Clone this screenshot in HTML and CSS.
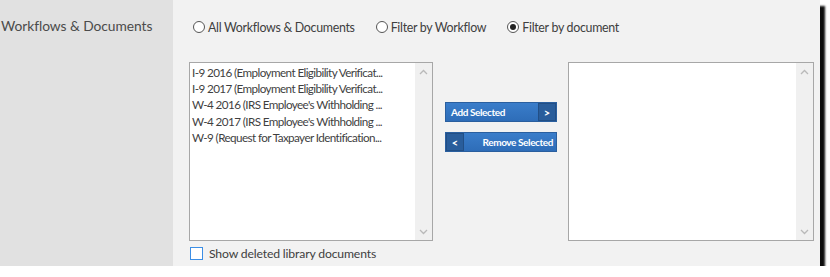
FILE: index.html
```html
<!DOCTYPE html>
<html>
<head>
<meta charset="utf-8">
<link rel="stylesheet" href="styles.css">
</head>
<body>
<div class="panel">
  <div class="label-col">Workflows &amp; Documents</div>
  <div class="content">
    <div class="radios">
      <label class="radio"><span class="dot"></span>All Workflows &amp; Documents</label>
      <label class="radio"><span class="dot"></span>Filter by Workflow</label>
      <label class="radio checked"><span class="dot"></span>Filter by document</label>
    </div>
    <div class="lists">
      <div class="listbox left">
        <ul class="items">
          <li>I-9 2016 (Employment Eligibility Verificat...</li>
          <li>I-9 2017 (Employment Eligibility Verificat...</li>
          <li>W-4 2016 (IRS Employee's Withholding ...</li>
          <li>W-4 2017 (IRS Employee's Withholding ...</li>
          <li>W-9 (Request for Taxpayer Identification...</li>
        </ul>
        <div class="scrollbar">
          <svg class="chev" width="9" height="6" viewBox="0 0 9 6"><path d="M1 5 L4.5 1.5 L8 5" fill="none" stroke="#b9b9b9" stroke-width="1.3"/></svg>
          <svg class="chev" width="9" height="6" viewBox="0 0 9 6"><path d="M1 1 L4.5 4.5 L8 1" fill="none" stroke="#b9b9b9" stroke-width="1.3"/></svg>
        </div>
      </div>
      <div class="buttons">
        <div class="btn add"><span class="btext">Add Selected</span><span class="arrow">&gt;</span></div>
        <div class="btn remove"><span class="arrow">&lt;</span><span class="btext">Remove Selected</span></div>
      </div>
      <div class="listbox right">
        <ul class="items"></ul>
        <div class="scrollbar">
          <svg class="chev" width="9" height="6" viewBox="0 0 9 6"><path d="M1 5 L4.5 1.5 L8 5" fill="none" stroke="#b9b9b9" stroke-width="1.3"/></svg>
          <svg class="chev" width="9" height="6" viewBox="0 0 9 6"><path d="M1 1 L4.5 4.5 L8 1" fill="none" stroke="#b9b9b9" stroke-width="1.3"/></svg>
        </div>
      </div>
    </div>
    <label class="check"><span class="box"></span>Show deleted library documents</label>
  </div>
</div>
</body>
</html>
```
FILE: styles.css
```css
* { box-sizing: border-box; }
body {
  margin: 0;
  background: #ffffff;
  font-family: Lato, "Open Sans", sans-serif;
  color: #4a4a4a;
}
.panel {
  display: flex;
  width: 820px;
  height: 266px;
  box-shadow: 5px 6px 2px rgba(0,0,0,0.95);
}
.label-col {
  width: 173px;
  background: #e1e1e1;
  padding: 17px 0 0 1px;
  font-size: 13.8px;
  letter-spacing: -0.05px;
  color: #4b4b4b;
}
.content {
  flex: 1;
  background: #f2f2f2;
  padding: 18px 0 0 16px;
}
.radios {
  display: flex;
  padding-left: 4px;
  gap: 21px;
  font-size: 12.4px;
  letter-spacing: -0.3px;
  height: 18px;
  align-items: center;
}
.radio {
  display: flex;
  align-items: center;
  gap: 3px;
  color: #404040;
}
.dot {
  width: 12px;
  height: 12px;
  border: 1.5px solid #555;
  border-radius: 50%;
  background: #fff;
  display: inline-flex;
  align-items: center;
  justify-content: center;
}
.checked .dot::after {
  content: "";
  width: 6px;
  height: 6px;
  border-radius: 50%;
  background: #222;
}
.lists {
  display: flex;
  margin-top: 26px;
  height: 179px;
}
.listbox {
  display: flex;
  border: 1px solid #a7a7a7;
  background: #fff;
  height: 179px;
}
.listbox.left { width: 244px; }
.listbox.right { width: 246px; margin-left: 11px; }
.items {
  flex: 1;
  list-style: none;
  margin: 0;
  padding: 1px 0 0 2px;
  font-size: 11.7px;
  letter-spacing: -0.6px;
  color: #3f3f3f;
}
.items li {
  height: 16.2px;
  line-height: 16.2px;
  white-space: nowrap;
}
.scrollbar {
  width: 17px;
  background: #f0f0f0;
  display: flex;
  flex-direction: column;
  justify-content: space-between;
  align-items: center;
  padding: 6px 0 5px;
}
.buttons {
  width: 112px;
  margin-left: 12px;
  padding-top: 40px;
  display: flex;
  flex-direction: column;
  gap: 10px;
}
.btn {
  height: 20px;
  display: flex;
  align-items: center;
  background: linear-gradient(#3a7dca, #2e6db8);
  border: 1px solid #2a5f9f;
  color: #fff;
  font-size: 10px;
  font-weight: bold;
  letter-spacing: -0.4px;
}
.btn .btext { flex: 1; padding-left: 5px; }
.remove .btext { text-align: right; padding-right: 3px; padding-left: 0; }
.arrow {
  width: 18px;
  height: 18px;
  background: #295d9b;
  border: 1px solid #224f86;
  display: flex;
  align-items: center;
  justify-content: center;
  font-size: 11px;
  letter-spacing: 0;
}
.check {
  display: flex;
  align-items: center;
  gap: 6px;
  margin-top: 5px;
  padding-left: 1px;
  font-size: 12.2px;
  letter-spacing: -0.15px;
  color: #404040;
}
.box {
  width: 13px;
  height: 13px;
  border: 1.5px solid #3c8ee5;
  background: #fff;
}
```
